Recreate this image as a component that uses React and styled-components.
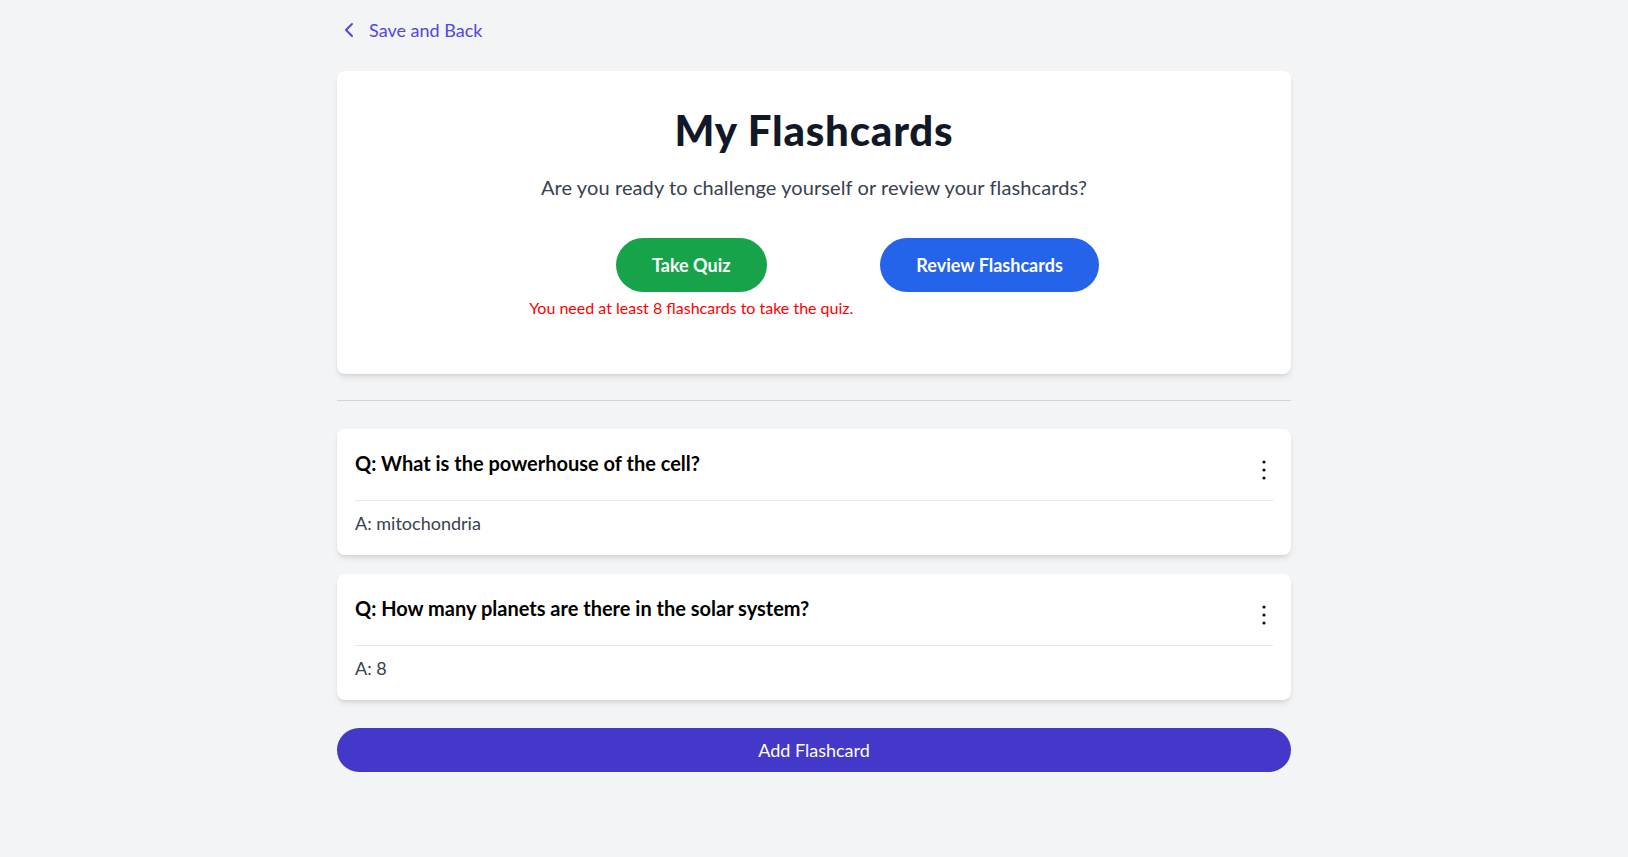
import React from "react";
import styled, { createGlobalStyle } from "styled-components";
import { ChevronLeft } from "lucide-react";

const GlobalStyle = createGlobalStyle`
  html, body {
    margin: 0;
    padding: 0;
    background: #f3f4f6;
    min-height: 100%;
  }
  body {
    font-family: "Segoe UI", Lato, "Noto Sans", sans-serif;
    color: #111827;
  }
  * { box-sizing: border-box; }
`;

const Page = styled.div`
  min-height: 857px;
  background: #f3f4f6;
  padding-top: 16px;
`;

const Column = styled.main`
  max-width: 954px;
  margin: 0 auto;
  display: flex;
  flex-direction: column;
`;

const BackLink = styled.a`
  display: inline-flex;
  align-items: center;
  gap: 8px;
  align-self: flex-start;
  height: 28px;
  margin-bottom: 27px;
  color: #4f46e5;
  font-size: 18px;
  line-height: 28px;
  text-decoration: none;
  cursor: pointer;
`;

const HeroCard = styled.section`
  background: #fff;
  border-radius: 8px;
  box-shadow: 0 4px 6px -1px rgba(0, 0, 0, 0.1), 0 2px 4px -2px rgba(0, 0, 0, 0.1);
  padding: 35px 32px 54px;
  text-align: center;
`;

const Title = styled.h1`
  margin: 0;
  font-size: 42px;
  line-height: 48px;
  font-weight: 900;
  color: #111827;
  letter-spacing: 0.8px;
`;

const Subtitle = styled.p`
  margin: 19px 0 0;
  font-size: 20px;
  line-height: 28px;
  color: #374151;
  letter-spacing: 0.1px;
`;

const ActionRow = styled.div`
  margin-top: 37px;
  display: flex;
  justify-content: center;
  align-items: flex-start;
  gap: 27px;
`;

const ActionColumn = styled.div`
  display: flex;
  flex-direction: column;
  align-items: center;
`;

const PillButton = styled.button`
  border: none;
  border-radius: 9999px;
  padding: 13px 36px;
  font-family: inherit;
  font-size: 18px;
  line-height: 28px;
  font-weight: 700;
  color: #fff;
  background: ${(p) => p.$bg};
  cursor: pointer;
`;

const ErrorText = styled.p`
  margin: 4px 0 0;
  font-size: 16px;
  line-height: 24px;
  color: #ff0000;
  white-space: nowrap;
`;

const Divider = styled.hr`
  margin: 26px 0 28px;
  border: none;
  border-top: 1px solid #d1d5db;
  height: 0;
`;

const CardList = styled.div`
  display: flex;
  flex-direction: column;
  gap: 19px;
`;

const FlashCard = styled.article`
  background: #fff;
  border-radius: 8px;
  box-shadow: 0 4px 6px -1px rgba(0, 0, 0, 0.1), 0 2px 4px -2px rgba(0, 0, 0, 0.1);
  padding: 18px 18px 18px;
`;

const CardHeader = styled.div`
  display: flex;
  justify-content: space-between;
  align-items: flex-start;
  padding-bottom: 18px;
  border-bottom: 1px solid #e5e7eb;
`;

const Question = styled.h2`
  margin: 0;
  padding-top: 2px;
  font-size: 20px;
  line-height: 28px;
  font-weight: 700;
  color: #000;
`;

const KebabButton = styled.button`
  display: flex;
  border: none;
  background: transparent;
  padding: 0;
  margin-top: 11px;
  width: 18px;
  height: 24px;
  cursor: pointer;
`;

const Answer = styled.p`
  margin: 8px 0 0;
  font-size: 18px;
  line-height: 28px;
  color: #374151;
`;

const AddButton = styled.button`
  margin-top: 28px;
  width: 100%;
  height: 44px;
  border: none;
  border-radius: 9999px;
  background: #4338ca;
  color: #fff;
  font-family: inherit;
  font-size: 18px;
  line-height: 28px;
  cursor: pointer;
`;

const Kebab = () => (
  <svg width="18" height="24" viewBox="0 0 18 24" aria-hidden="true">
    <circle cx="9" cy="4" r="1.6" fill="#111" />
    <circle cx="9" cy="12" r="1.6" fill="#111" />
    <circle cx="9" cy="20" r="1.6" fill="#111" />
  </svg>
);

const cards = [
  { q: "What is the powerhouse of the cell?", a: "mitochondria" },
  { q: "How many planets are there in the solar system?", a: "8" },
];

export default function App() {
  return (
    <>
      <GlobalStyle />
      <Page>
        <Column>
          <BackLink>
            <ChevronLeft size={24} strokeWidth={2} />
            Save and Back
          </BackLink>
          <HeroCard>
            <Title>My Flashcards</Title>
            <Subtitle>Are you ready to challenge yourself or review your flashcards?</Subtitle>
            <ActionRow>
              <ActionColumn>
                <PillButton $bg="#16a34a">Take Quiz</PillButton>
                <ErrorText>You need at least 8 flashcards to take the quiz.</ErrorText>
              </ActionColumn>
              <PillButton $bg="#2563eb">Review Flashcards</PillButton>
            </ActionRow>
          </HeroCard>
          <Divider />
          <CardList>
            {cards.map((c) => (
              <FlashCard key={c.q}>
                <CardHeader>
                  <Question>Q: {c.q}</Question>
                  <KebabButton aria-label="More options">
                    <Kebab />
                  </KebabButton>
                </CardHeader>
                <Answer>A: {c.a}</Answer>
              </FlashCard>
            ))}
          </CardList>
          <AddButton>Add Flashcard</AddButton>
        </Column>
      </Page>
    </>
  );
}
